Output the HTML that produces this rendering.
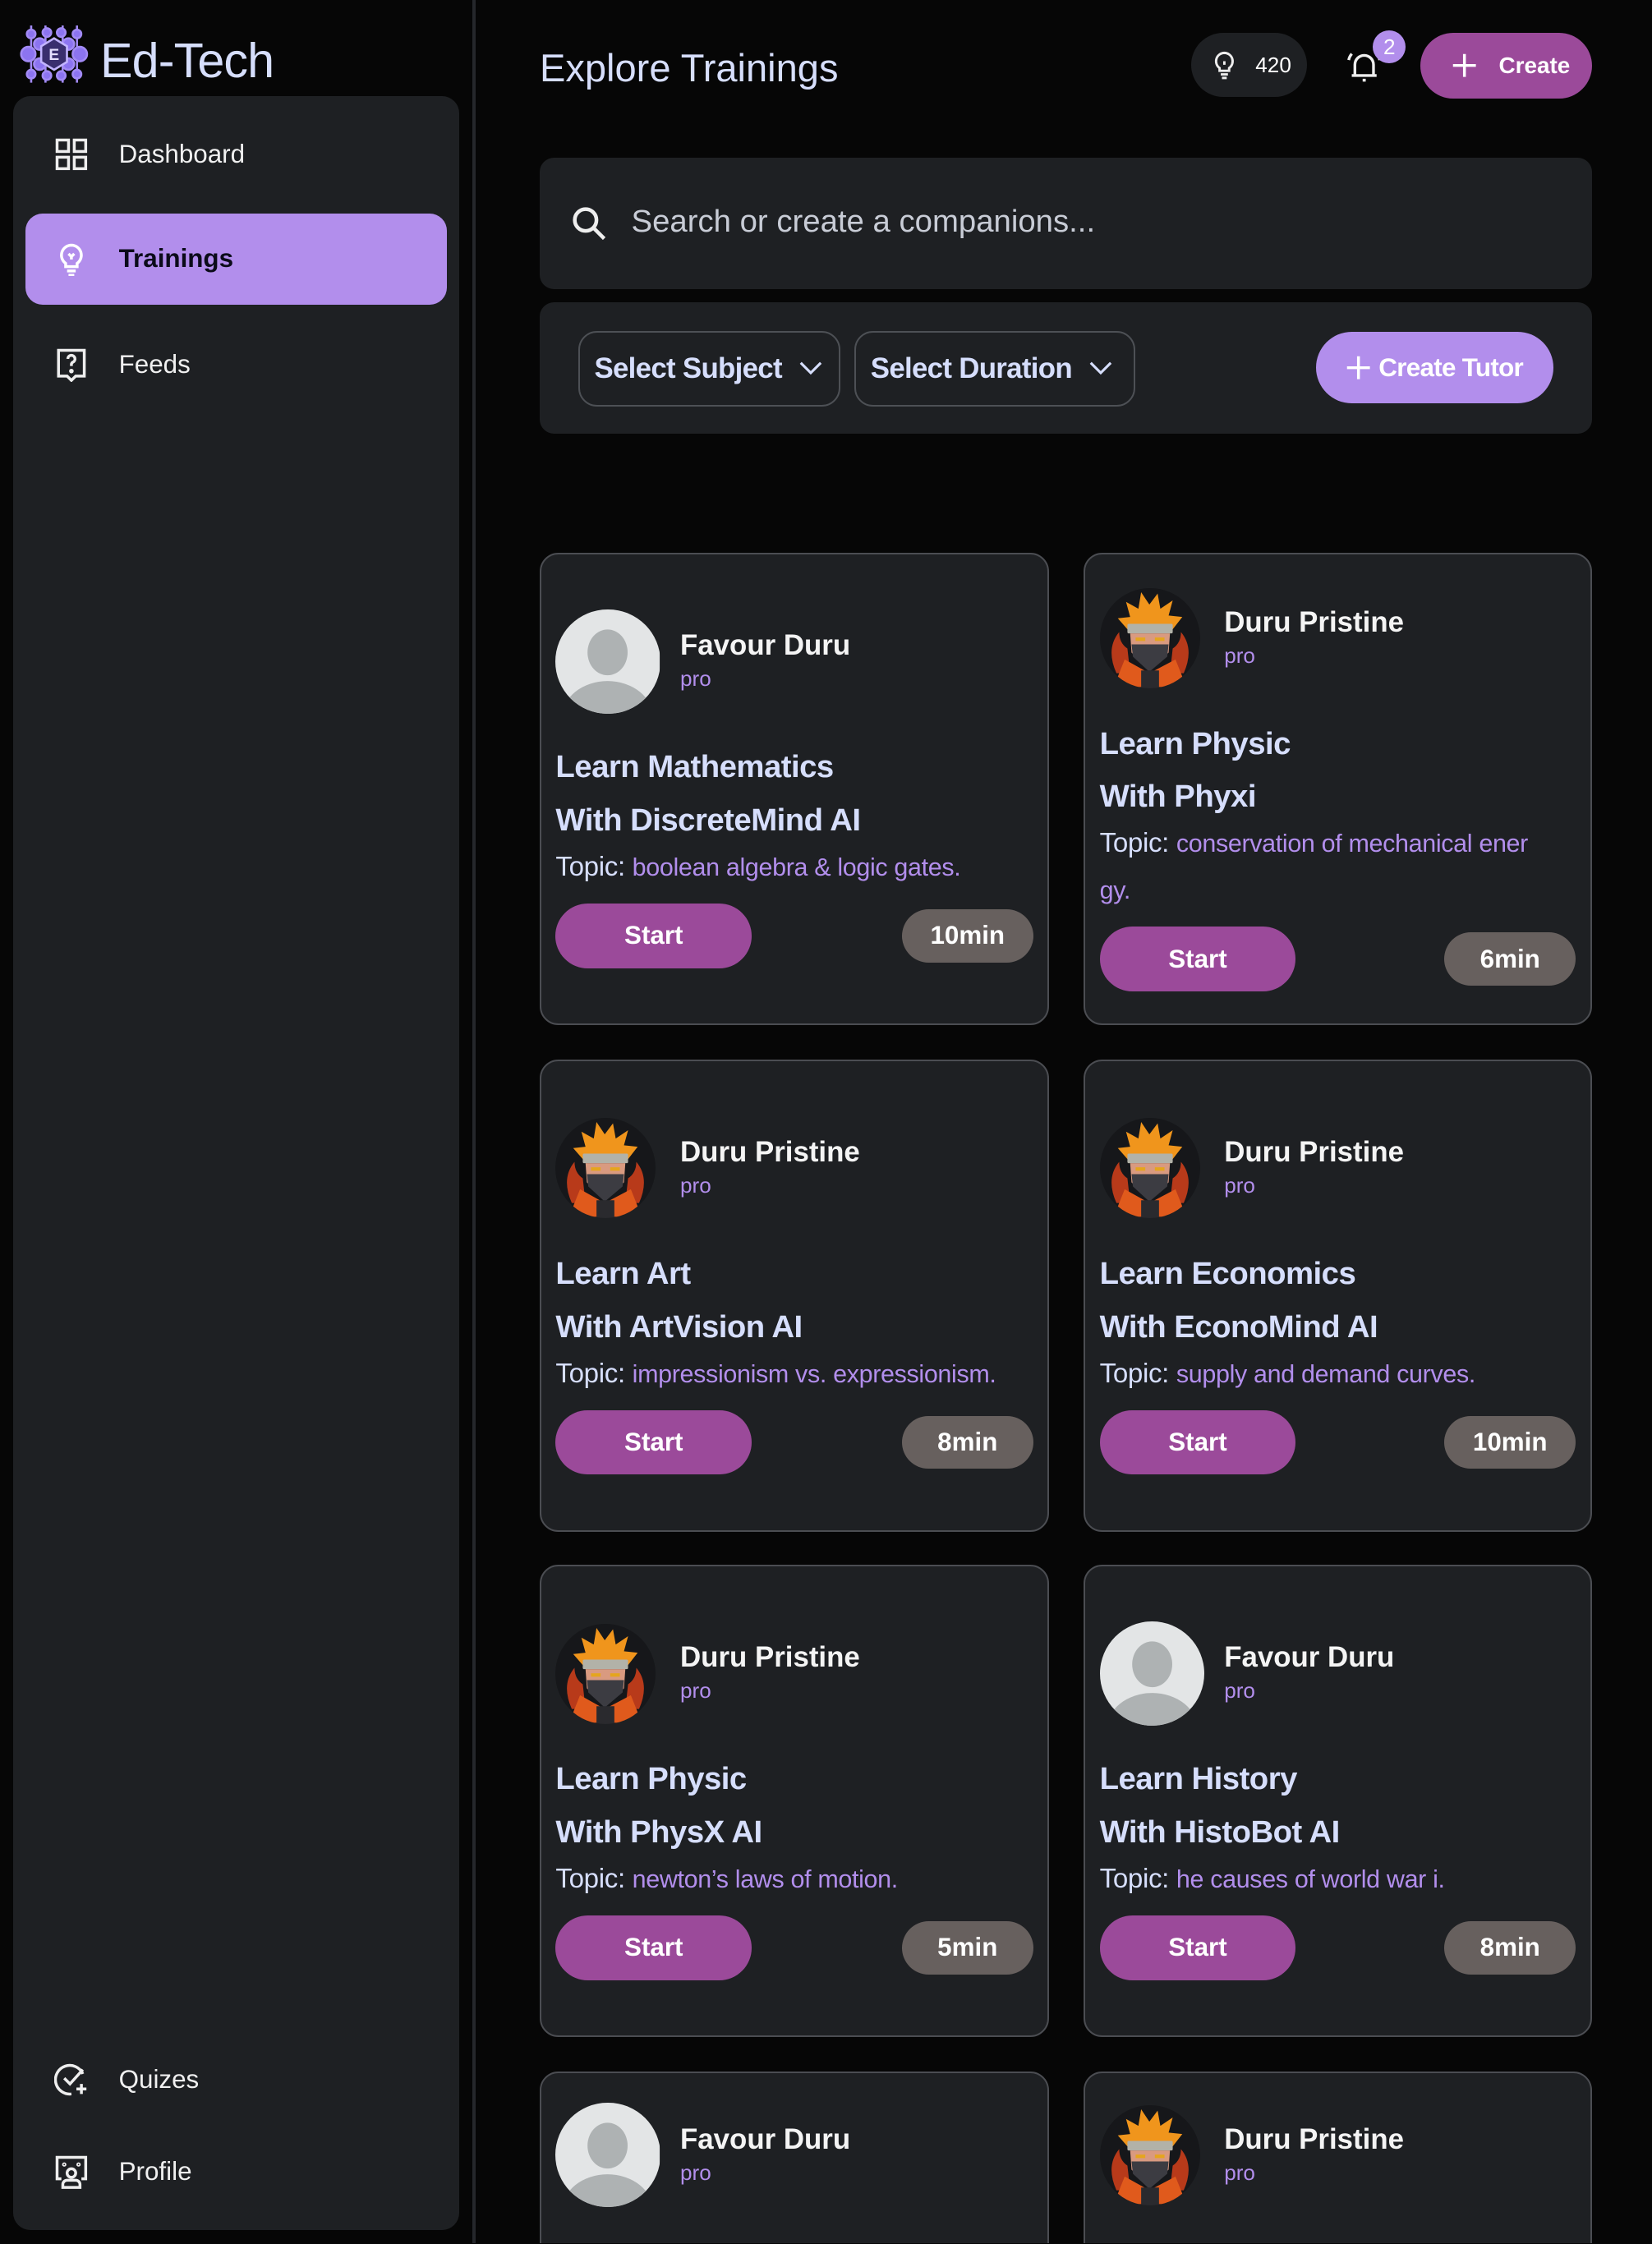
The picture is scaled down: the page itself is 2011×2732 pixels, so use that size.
<!DOCTYPE html>
<html><head><meta charset="utf-8"><style>
*{box-sizing:border-box;margin:0;padding:0}
html,body{background:#060606;overflow:hidden}
body{width:2011px;height:2732px}
#z{zoom:1.74267;width:1154px;height:1567px;position:relative;overflow:hidden;font-family:"Liberation Sans",sans-serif;color:#fff}
.abs{position:absolute}
.side{left:9px;top:67px;width:312px;height:1491px;background:#1e2023;border-radius:12px}
.div{left:330px;top:0;width:2px;height:1567px;background:#25272b}
.nav{position:absolute;left:38px;display:flex;align-items:center;font-size:18px;color:#f0f0f0}
.nav svg{width:24px;height:24px;margin-right:21px}
.act{left:18px;top:149px;width:294px;height:64px;background:#b28eec;border-radius:12px}
.card{position:absolute;width:356px;height:330px;background:#1e2023;border:1.5px solid #4b4d52;border-radius:13px;padding:0 10px;display:flex;flex-direction:column;justify-content:center}
.hd{display:flex;align-items:center;height:73px}
.av{width:73px;height:73px;border-radius:50%;flex:none;overflow:hidden}
.nm{margin-left:14px}
.nm b{display:block;font-size:20px;color:#f4f4f4;line-height:24px}
.nm i{display:block;font-style:normal;font-size:15px;color:#b28eec;line-height:22px}
.t{font-size:22px;color:#d6defc;font-weight:bold;line-height:37px;letter-spacing:-.3px}
.t1{margin-top:19px}
.tp{font-size:19px;color:#d6defc;line-height:32px;margin-top:-2px;letter-spacing:-.2px}
.tp span{color:#b28eec;font-size:17.5px}
.ft{display:flex;justify-content:space-between;align-items:center;margin-top:9px}
.st{width:137px;height:45px;border-radius:23px;background:#9b4a9a;font-size:18px;font-weight:bold;display:flex;align-items:center;justify-content:center}
.du{width:92px;height:37px;border-radius:19px;background:#67605e;font-size:18px;font-weight:bold;display:flex;align-items:center;justify-content:center}
</style></head><body><div id="z">
<div class="abs div"></div>
<svg class="abs" style="left:14px;top:14px" width="48" height="48" viewBox="0 0 48 48">
<g stroke="#a28af5" stroke-width="1.5" fill="#8c74f0">
<line x1="8" y1="4" x2="8" y2="44"/><line x1="40" y1="4" x2="40" y2="44"/><line x1="18" y1="4" x2="18" y2="44"/><line x1="30" y1="4" x2="30" y2="44"/>
<circle cx="8" cy="10" r="3"/><circle cx="19" cy="9" r="3"/><circle cx="29" cy="9" r="3"/><circle cx="40" cy="10" r="3"/>
<circle cx="8" cy="38" r="3"/><circle cx="19" cy="39" r="3"/><circle cx="29" cy="39" r="3"/><circle cx="40" cy="38" r="3"/>
<circle cx="6" cy="24" r="5"/><circle cx="42" cy="24" r="5"/><circle cx="14" cy="17" r="4"/><circle cx="34" cy="17" r="4"/><circle cx="14" cy="31" r="4"/><circle cx="34" cy="31" r="4"/>
</g><polygon points="24,13 33,18.5 33,29.5 24,35 15,29.5 15,18.5" fill="#3a2f6e" stroke="#c2b4ff" stroke-width="1.5"/>
<text x="24" y="28" font-size="11" font-weight="bold" fill="#e6e0ff" text-anchor="middle" font-family="Liberation Sans">E</text></svg>
<div class="abs" style="left:70px;top:21px;font-size:34px;color:#d6defc;line-height:42px;letter-spacing:-.5px">Ed-Tech</div>
<div class="abs side"></div>
<div class="abs act"></div>
<div class="nav" style="top:96px"><svg viewBox="0 0 24 24" fill="none" stroke="#eee" stroke-width="2"><rect x="2" y="2" width="8" height="8"/><rect x="14" y="2" width="8" height="8"/><rect x="2" y="14" width="8" height="8"/><rect x="14" y="14" width="8" height="8"/></svg>Dashboard</div>
<div class="nav" style="top:169px;color:#0b0b1a;font-weight:bold"><svg viewBox="0 0 24 24" fill="none" stroke="#fff" stroke-width="2"><path d="M12 2a7 7 0 0 0-4 12.7V17h8v-2.3A7 7 0 0 0 12 2z"/><path d="M9 20h6M10 23h4M12 12V9M10 8l2 2 2-2"/></svg>Trainings</div>
<div class="nav" style="top:243px"><svg viewBox="0 0 24 24" fill="none" stroke="#eee" stroke-width="2"><path d="M3 2h18v18h-6l-3 3-3-3H3z"/><path d="M9.5 8a2.5 2.5 0 1 1 3.5 2.3c-.7.4-1 .9-1 1.7v1"/><circle cx="12" cy="16.5" r=".6" fill="#eee"/></svg>Feeds</div>
<div class="nav" style="top:1441px"><svg viewBox="0 0 24 24" fill="none" stroke="#eee" stroke-width="2"><path d="M20 8A10 10 0 1 0 12 22"/><path d="M7 11l4 4 9-10M19 15v7M15.5 18.5h7"/></svg>Quizes</div>
<div class="nav" style="top:1505px"><svg viewBox="0 0 24 24" fill="none" stroke="#eee" stroke-width="2"><path d="M5 17H2V2h20v15h-3"/><circle cx="12" cy="13" r="3"/><path d="M6 23v-2a3 3 0 0 1 3-3h6a3 3 0 0 1 3 3v2z"/><circle cx="7" cy="7" r=".5"/><circle cx="17" cy="7" r=".5"/></svg>Profile</div>
<div class="abs" style="left:377px;top:30px;font-size:27px;color:#d6defc;line-height:36px">Explore Trainings</div>
<div class="abs" style="left:832px;top:23px;width:81px;height:45px;border-radius:23px;background:#1e2023;display:flex;align-items:center;padding-left:13px;font-size:15px">
<svg width="20" height="24" viewBox="0 0 24 24" fill="none" stroke="#eee" stroke-width="2"><path d="M12 2a7 7 0 0 0-4 12.7V17h8v-2.3A7 7 0 0 0 12 2z"/><path d="M9 20h6M10 23h4M12 12V9"/></svg><span style="margin-left:12px">420</span></div>
<svg class="abs" style="left:940px;top:33px" width="26" height="26" viewBox="0 0 24 24" fill="none" stroke="#eee" stroke-width="1.8"><path d="M6 18V11a6 6 0 0 1 12 0v7zM4 18h16M11 21h2M2 8a9 9 0 0 1 2-4M22 8a9 9 0 0 0-2-4"/></svg>
<div class="abs" style="left:959px;top:21px;width:23px;height:23px;border-radius:50%;background:#b28eec;font-size:15px;text-align:center;line-height:23px">2</div>
<div class="abs" style="left:992px;top:23px;width:120px;height:46px;border-radius:23px;background:#9b4a9a;display:flex;align-items:center;padding-left:22px;font-size:16px;font-weight:bold">
<svg width="18" height="18" viewBox="0 0 18 18" stroke="#fff" stroke-width="2"><path d="M9 1v16M1 9h16"/></svg><span style="margin-left:15px">Create</span></div>
<div class="abs" style="left:377px;top:110px;width:735px;height:92px;border-radius:10px;background:#1e2023"></div>
<svg class="abs" style="left:398px;top:143px" width="26" height="26" viewBox="0 0 24 24" fill="none" stroke="#eee" stroke-width="2.4"><circle cx="10" cy="10" r="7"/><path d="M15 15l7 7"/></svg>
<div class="abs" style="left:441px;top:140px;font-size:22px;color:#c8ccd6;line-height:30px">Search or create a companions...</div>
<div class="abs" style="left:377px;top:211px;width:735px;height:92px;border-radius:10px;background:#1e2023"></div>
<div class="abs" style="left:404px;top:231px;width:183px;height:53px;border:1.5px solid #4d5055;border-radius:13px;display:flex;align-items:center;padding-left:10px;font-size:20px;font-weight:bold;color:#d6defc;letter-spacing:-.4px">Select Subject<svg style="margin-left:12px" width="16" height="10" viewBox="0 0 16 10" fill="none" stroke="#d6defc" stroke-width="1.8"><path d="M1 1l7 7 7-7"/></svg></div>
<div class="abs" style="left:597px;top:231px;width:196px;height:53px;border:1.5px solid #4d5055;border-radius:13px;display:flex;align-items:center;padding-left:10px;font-size:20px;font-weight:bold;color:#d6defc;letter-spacing:-.4px">Select Duration<svg style="margin-left:12px" width="16" height="10" viewBox="0 0 16 10" fill="none" stroke="#d6defc" stroke-width="1.8"><path d="M1 1l7 7 7-7"/></svg></div>
<div class="abs" style="left:919px;top:232px;width:166px;height:50px;border-radius:25px;background:#b28eec;display:flex;align-items:center;justify-content:center;font-size:18px;font-weight:bold;letter-spacing:-.4px"><svg width="18" height="18" viewBox="0 0 18 18" stroke="#fff" stroke-width="2"><path d="M9 1v16M1 9h16"/></svg><span style="margin-left:5px">Create Tutor</span></div>

<svg width="0" height="0" style="position:absolute"><defs>
<symbol id="def" viewBox="0 0 73 73"><rect width="73" height="73" fill="#e3e5e6"/><ellipse cx="36.5" cy="30" rx="14" ry="16" fill="#aeb2b3"/><ellipse cx="36.5" cy="76" rx="32" ry="26" fill="#aeb2b3"/></symbol>
<symbol id="nar" viewBox="0 0 73 73"><rect width="73" height="73" fill="#16171a"/>
<path d="M12 62 Q4 44 14 32 Q14 40 20 44 L22 62Z M61 62 Q69 44 59 32 Q59 40 53 44 L51 62Z" fill="#b83a1a"/>
<path d="M10 72 L18 52 L36 62 L55 52 L63 72Z" fill="#e05a1c"/>
<path d="M20 30 L13 22 L22 21 L19 10 L28 15 L30 3 L36 12 L42 4 L44 15 L53 9 L50 20 L60 21 L53 30Z" fill="#f0951c"/>
<rect x="20" y="26" width="33" height="7" rx="1" fill="#b2b2a8"/>
<path d="M22 33 H51 L50 47 L36 60 L23 47Z" fill="#d99a80"/>
<rect x="26" y="36" width="7" height="2.5" fill="#e5a51e"/><rect x="40" y="36" width="7" height="2.5" fill="#e5a51e"/>
<path d="M23 41 H50 L49 50 L36 61 L24 50Z" fill="#3c3c42"/>
<rect x="30" y="60" width="13" height="13" fill="#2a2a2e"/></symbol>
</defs></svg>

<div class="card" style="left:377px;top:386px"><div class="hd"><svg class="av"><use href="#def"/></svg><div class="nm"><b>Favour Duru</b><i>pro</i></div></div><div class="t t1">Learn Mathematics</div><div class="t">With DiscreteMind AI</div><div class="tp">Topic: <span>boolean algebra &amp; logic gates.</span></div><div class="ft"><div class="st">Start</div><div class="du">10min</div></div></div>
<div class="card" style="left:757px;top:386px;width:355px"><div class="hd"><svg class="av" style="width:70px;height:70px;margin-right:3px"><use href="#nar"/></svg><div class="nm"><b>Duru Pristine</b><i>pro</i></div></div><div class="t t1">Learn Physic</div><div class="t">With Phyxi</div><div class="tp">Topic: <span>conservation of mechanical ener<br>gy.</span></div><div class="ft"><div class="st">Start</div><div class="du">6min</div></div></div>

<div class="card" style="left:377px;top:740px"><div class="hd"><svg class="av" style="width:70px;height:70px;margin-right:3px"><use href="#nar"/></svg><div class="nm"><b>Duru Pristine</b><i>pro</i></div></div><div class="t t1">Learn Art</div><div class="t">With ArtVision AI</div><div class="tp">Topic: <span>impressionism vs. expressionism.</span></div><div class="ft"><div class="st">Start</div><div class="du">8min</div></div></div>
<div class="card" style="left:757px;top:740px;width:355px"><div class="hd"><svg class="av" style="width:70px;height:70px;margin-right:3px"><use href="#nar"/></svg><div class="nm"><b>Duru Pristine</b><i>pro</i></div></div><div class="t t1">Learn Economics</div><div class="t">With EconoMind AI</div><div class="tp">Topic: <span>supply and demand curves.</span></div><div class="ft"><div class="st">Start</div><div class="du">10min</div></div></div>

<div class="card" style="left:377px;top:1093px"><div class="hd"><svg class="av" style="width:70px;height:70px;margin-right:3px"><use href="#nar"/></svg><div class="nm"><b>Duru Pristine</b><i>pro</i></div></div><div class="t t1">Learn Physic</div><div class="t">With PhysX AI</div><div class="tp">Topic: <span>newton’s laws of motion.</span></div><div class="ft"><div class="st">Start</div><div class="du">5min</div></div></div>
<div class="card" style="left:757px;top:1093px;width:355px"><div class="hd"><svg class="av"><use href="#def"/></svg><div class="nm"><b>Favour Duru</b><i>pro</i></div></div><div class="t t1">Learn History</div><div class="t">With HistoBot AI</div><div class="tp">Topic: <span>he causes of world war i.</span></div><div class="ft"><div class="st">Start</div><div class="du">8min</div></div></div>

<div class="card" style="left:377px;top:1447px;justify-content:flex-start;padding-top:21px"><div class="hd"><svg class="av"><use href="#def"/></svg><div class="nm"><b>Favour Duru</b><i>pro</i></div></div></div>
<div class="card" style="left:757px;top:1447px;width:355px;justify-content:flex-start;padding-top:21px"><div class="hd"><svg class="av" style="width:70px;height:70px;margin-right:3px"><use href="#nar"/></svg><div class="nm"><b>Duru Pristine</b><i>pro</i></div></div></div>
</div></body></html>
